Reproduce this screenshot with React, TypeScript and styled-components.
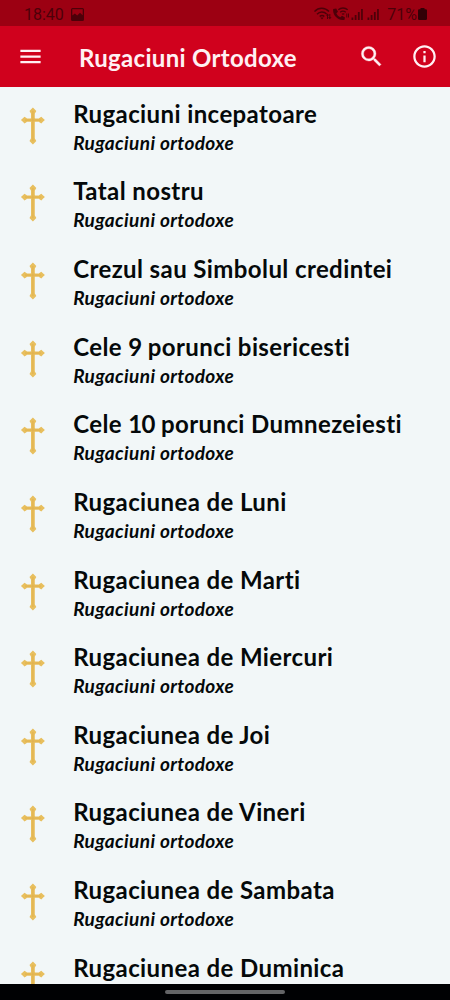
import React from 'react';
import styled, { createGlobalStyle } from 'styled-components';

const GlobalStyle = createGlobalStyle`
  * { box-sizing: border-box; }
  body { margin: 0; background: #f2f7f8; font-family: Lato, sans-serif; }
`;

const Screen = styled.div`
  display: flex;
  flex-direction: column;
  width: 450px;
  height: 1000px;
  overflow: hidden;
  background: #f2f7f8;
`;

const StatusBar = styled.div`
  flex: none;
  display: flex;
  align-items: center;
  height: 26px;
  padding: 2px 23px 0 24px;
  background: #9c0012;
  color: #4d0009;
  font: 400 16px Roboto, sans-serif;
`;

const Clock = styled.span`
  margin-right: 7px;
`;

const StatusIcons = styled.div`
  display: flex;
  align-items: center;
  margin-left: auto;
`;

const Battery = styled.span`
  margin-left: 4px;
  margin-right: 1px;
`;

const Toolbar = styled.header`
  flex: none;
  display: flex;
  align-items: center;
  height: 61px;
  padding: 0 12.5px 0 17px;
  background: #d0011d;
  color: #fff0f3;
`;

const ToolbarTitle = styled.h1`
  flex: 1;
  margin: 2px 0 0 35px;
  font-size: 24px;
  font-weight: 700;
  line-height: 29px;
  letter-spacing: 0.3px;
  white-space: nowrap;
`;

const IconButton = styled.button`
  display: flex;
  padding: 0;
  margin-left: ${(p: { $gap?: number }) => p.$gap ?? 0}px;
  border: 0;
  background: none;
  color: inherit;
`;

const List = styled.ul`
  flex: 1;
  min-height: 0;
  overflow: hidden;
  margin: 0;
  padding: 0;
  list-style: none;
`;

const Row = styled.li`
  display: flex;
  height: 77.63px;
  padding: 11.8px 0 0 20px;

  &:last-child {
    height: 50px;
  }
`;

const CrossIcon = styled.svg`
  flex: none;
  width: 26px;
  height: 38px;
  margin: 8px 27.2px 0 0;
`;

const RowText = styled.div`
  display: flex;
  flex-direction: column;
  color: #05090a;
  white-space: nowrap;
`;

const RowTitle = styled.span`
  font-size: 24px;
  font-weight: 700;
  line-height: 30px;
  letter-spacing: 0.4px;
`;

const Numeral = styled.span`
  letter-spacing: -0.7px;
`;

const RowSubtitle = styled.span`
  font-size: 19px;
  font-style: italic;
  font-weight: 700;
  line-height: 24px;
  letter-spacing: 0.36px;
  margin-top: 2px;
`;

const NavigationBar = styled.div`
  flex: none;
  display: flex;
  justify-content: center;
  height: 16px;
  padding-top: 6px;
  background: #000103;
`;

const HomeHandle = styled.div`
  width: 120px;
  height: 4px;
  border-radius: 2px;
  background: #636466;
`;

const SUBTITLE = 'Rugaciuni ortodoxe';

const prayers = [
  'Rugaciuni incepatoare',
  'Tatal nostru',
  'Crezul sau Simbolul credintei',
  'Cele 9 porunci bisericesti',
  'Cele 10 porunci Dumnezeiesti',
  'Rugaciunea de Luni',
  'Rugaciunea de Marti',
  'Rugaciunea de Miercuri',
  'Rugaciunea de Joi',
  'Rugaciunea de Vineri',
  'Rugaciunea de Sambata',
  'Rugaciunea de Duminica',
];

const withNumerals = (text: string) =>
  text.split(/(\d+)/).map((part, i) => (i % 2 ? <Numeral key={i}>{part}</Numeral> : part));

const Cross = () => (
  <CrossIcon viewBox="0 0 26 38" fill="#e8bf5e">
    <path d="M11 3.500h3.800v31H11zM4 11.400h18v3.400H4z" />
    <path d="M12.900 .6l1.500 1.300 1.900 2-1.400 2.700h-4L9.500 3.900l1.900-2zM12.900 37.400l1.500-1.300 1.900-2-1.400-2.700h-4l-1.400 2.700 1.900 2zM.9 13.100l1.700-1.500 1.900-1.900 2.300 1.500v3.800l-2.300 1.500-1.900-1.900zM24.900 13.100l-1.700-1.500-1.900-1.900-2.300 1.500v3.800l2.300 1.500 1.900-1.900z" />
    <circle cx="12.900" cy="13.100" r="2.500" />
    <path d="M12.900 4v30M5 13.100h16" stroke="#dfaf4a" strokeWidth=".8" />
  </CrossIcon>
);

const Picture = () => (
  <svg width="13" height="13" viewBox="0 0 13 13">
    <path fill="currentColor" fillRule="evenodd" d="M1.500 0h10A1.500 1.500 0 0 1 13 1.500v10a1.500 1.500 0 0 1-1.500 1.500h-10A1.500 1.500 0 0 1 0 11.500v-10A1.500 1.500 0 0 1 1.500 0zM1.300 1.300v6.200l2.600-2 2.300 2 2.800-2.700 2.700 2.400V1.300z" />
  </svg>
);

const Wifi = () => (
  <svg width="19" height="14" viewBox="-1 0 19 14" fill="none" stroke="currentColor" strokeWidth="1.500">
    <path d="M-.5 4.600C3.500 .2 10 .2 14 4.600M2 7.200c2.700-2.900 7-2.900 9.600-.2M4.700 9.600c1.400-1.500 3.300-1.500 4.600 0" />
    <path d="M5.400 10.500h3.200L7 12.500zM10.700 8.400l1.800-2 1.800 2zM13 10.300h3.600l-1.800 2z" fill="currentColor" stroke="none" />
    <path d="M12.500 8v4M14.800 7v4" strokeWidth="1" />
  </svg>
);

const WifiCall = () => (
  <svg width="18" height="14" viewBox="0 0 18 14" fill="none" stroke="currentColor" strokeWidth="1.300">
    <path fill="currentColor" stroke="none" d="M.2 2l3-.5 1.800 3.200-1.600 1.500c.8 1.900 2 3.200 3.900 4.100l1.700-1.500 3 1.700-.6 2.400C5.500 14.200-.8 8.500.2 2z" />
    <path d="M5.300 2.800C8 .4 12 .4 14.700 2.800M7.200 5.200c1.700-1.400 3.900-1.400 5.600 0M9 7.300c.8-.6 1.500-.6 2.300 0" />
    <path d="M13.800 6.500v4M15.500 6.500v4" strokeWidth="1" />
  </svg>
);

const Signal = () => (
  <svg width="16" height="13" viewBox="0 0 16 13" fill="currentColor">
    <path d="M.5 9.500h1.800V12H.5zM3.700 7h1.800v5H3.700zM6.900 4h1.800v8H6.900zM10.100 1h1.700v11h-1.700z" />
  </svg>
);

const BatteryIcon = () => (
  <svg width="9" height="12" viewBox="0 0 9 12">
    <path fill="#330006" d="M2.500 0h4v1.200h1.300A1.200 1.200 0 0 1 9 2.400v8.400A1.200 1.200 0 0 1 7.800 12H1.200A1.200 1.200 0 0 1 0 10.800V2.400a1.200 1.200 0 0 1 1.200-1.200h1.300z" />
  </svg>
);

const MenuIcon = () => (
  <svg width="27" height="27" viewBox="0 0 24 24" fill="currentColor">
    <path d="M3 18h18v-2H3v2zm0-5h18v-2H3v2zm0-7v2h18V6H3z" />
  </svg>
);

const SearchIcon = () => (
  <svg width="27" height="27" viewBox="0 0 24 24" fill="currentColor" stroke="currentColor" strokeWidth=".3">
    <path d="M15.500 14h-.79l-.28-.27A6.471 6.471 0 0 0 16 9.500 6.500 6.500 0 1 0 9.500 16c1.610 0 3.090-.59 4.230-1.570l.27.280v.79l5 4.990L20.490 19l-4.990-5zm-6 0C7.010 14 5 11.990 5 9.500S7.010 5 9.500 5 14 7.010 14 9.500 11.990 14 9.500 14z" />
  </svg>
);

const InfoIcon = () => (
  <svg width="27" height="27" viewBox="0 0 24 24" fill="currentColor">
    <path d="M11 7h2v2h-2zm0 4h2v6h-2zm1-9C6.480 2 2 6.480 2 12s4.480 10 10 10 10-4.480 10-10S17.520 2 12 2zm0 18c-4.410 0-8-3.590-8-8s3.590-8 8-8 8 3.590 8 8-3.590 8-8 8z" />
  </svg>
);

export default function App() {
  return (
    <>
      <GlobalStyle />
      <Screen>
        <StatusBar>
          <Clock>18:40</Clock>
          <Picture />
          <StatusIcons>
            <Wifi />
            <WifiCall />
            <Signal />
            <Signal />
            <Battery>71%</Battery>
            <BatteryIcon />
          </StatusIcons>
        </StatusBar>
        <Toolbar>
          <IconButton aria-label="Menu"><MenuIcon /></IconButton>
          <ToolbarTitle>Rugaciuni Ortodoxe</ToolbarTitle>
          <IconButton aria-label="Search"><SearchIcon /></IconButton>
          <IconButton aria-label="Info" $gap={26}><InfoIcon /></IconButton>
        </Toolbar>
        <List>
          {prayers.map((name, index) => (
            <Row key={name}>
              <Cross />
              <RowText>
                <RowTitle>{withNumerals(name)}</RowTitle>
                {index < prayers.length - 1 && <RowSubtitle>{SUBTITLE}</RowSubtitle>}
              </RowText>
            </Row>
          ))}
        </List>
        <NavigationBar>
          <HomeHandle />
        </NavigationBar>
      </Screen>
    </>
  );
}
